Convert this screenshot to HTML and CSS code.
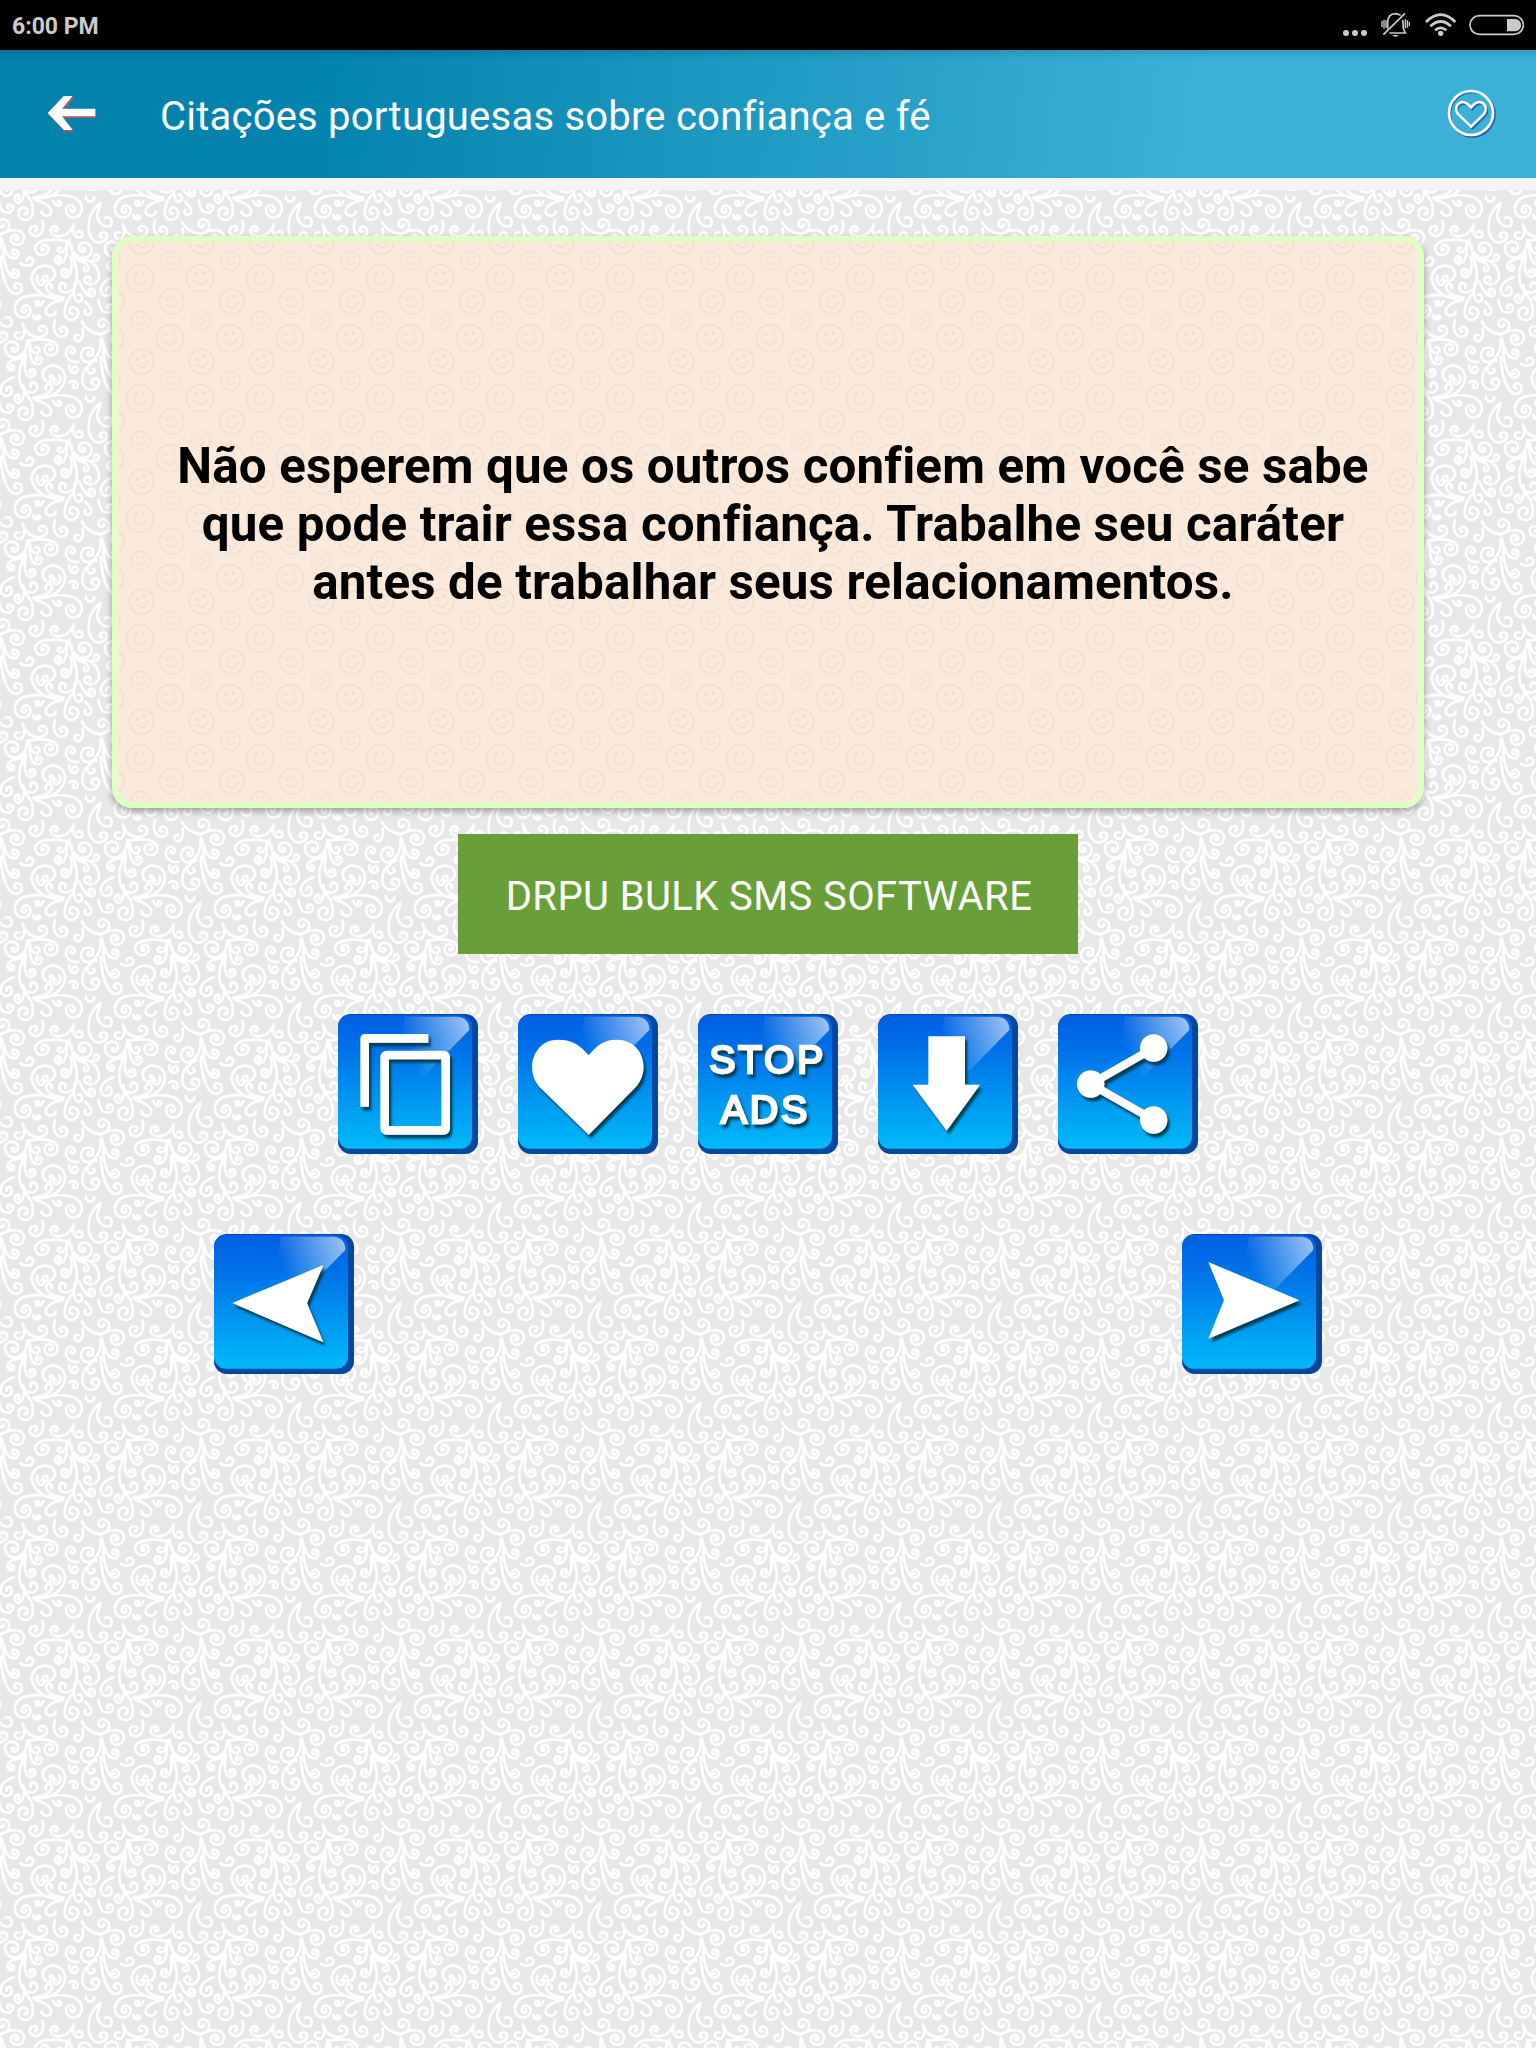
FILE: index.html
```html
<!DOCTYPE html>
<html lang="pt">

<head>
    <meta charset="utf-8">
    <title>Citações portuguesas sobre confiança e fé</title>
    <link rel="stylesheet" href="styles.css">
</head>

<body>
    <!-- shared button face -->
    <svg class="defs" width="0" height="0">
        <defs>
            <linearGradient id="blue" x1="0" y1="0" x2="0" y2="1">
                <stop offset="0" stop-color="#005fe2"/>
                <stop offset="0.25" stop-color="#0070e8"/>
                <stop offset="1" stop-color="#00baf9"/>
            </linearGradient>
            <linearGradient id="gloss" gradientUnits="userSpaceOnUse" x1="210" y1="110" x2="390" y2="30">
                <stop offset="0" stop-color="#fff" stop-opacity="0"/>
                <stop offset="1" stop-color="#fff" stop-opacity="0.6"/>
            </linearGradient>
            <filter id="shadow" x="-10%" y="-10%" width="130%" height="130%">
                <feDropShadow dx="7" dy="11" stdDeviation="3.5" flood-color="#003c50" flood-opacity="0.95"/>
            </filter>
            <symbol id="face" viewBox="0 0 420 420">
                <rect width="420" height="420" rx="38" fill="#04479f"/>
                <rect x="0" y="3" width="402" height="401" rx="36" fill="url(#blue)"/>
                <path d="M200 8H360Q394 12 394 48L205 240Q180 120 200 8Z" fill="url(#gloss)"/>
            </symbol>
        </defs>
    </svg>

    <div class="status">
        <span>6:00 PM</span>
        <svg width="188" height="50" viewBox="0 0 564 150">
            <g fill="#cbcbcb">
                <circle cx="30" cy="99" r="9"/><circle cx="57" cy="99" r="9"/><circle cx="84" cy="99" r="9"/>
                <path d="M168 105h20q-10 10-20 0z"/>
                <circle cx="314" cy="100" r="8"/>
                <path d="M513 57h24a18 18 0 0 1 0 37h-24z"/>
            </g>
            <g fill="none" stroke="#cbcbcb" stroke-width="5">
                <path d="M155 86V66Q156 42 178 41Q186 41 194 46M200 60Q202 76 202 86L208 99H160"/>
                <path d="M142 104L207 40"/>
                <path stroke-width="4" d="M138 63v18M144 59v27M150 61v22M208 58v27M214 61v22M220 65v14"/>
                <path stroke-width="8" d="M270 66Q314 22 358 66M283 79Q314 50 345 79M297 91Q314 76 331 91"/>
                <rect x="402" y="47" width="160" height="56" rx="28"/>
            </g>
        </svg>
    </div>

    <div class="header">
        <svg class="back" width="50" height="38" viewBox="0 0 150 114">
            <path fill="#b0565c" d="M3 57L51 9H80L51 44H146V69H51L80 110H52Z"/>
            <path fill="#fff" d="M2 54L50 3H77L45 41H145V64H45L77 105H51Z"/>
        </svg>
        <h1>Citações portuguesas sobre confiança e fé</h1>
        <svg class="fav" width="50" height="50" viewBox="0 0 150 150">
            <g fill="none" stroke="#2560a8" stroke-width="7" transform="translate(4 4)">
                <circle cx="75" cy="75" r="67"/>
                <path d="M75 117L37 80C19 58 43 30 66 50L75 59L84 50C107 30 131 58 113 80Z"/>
            </g>
            <g fill="none" stroke="#fff" stroke-width="8">
                <circle cx="75" cy="75" r="66"/>
                <path d="M75 116L37 79C19 57 43 29 66 49L75 58L84 49C107 29 131 57 113 79Z"/>
            </g>
        </svg>
    </div>

    <div class="content">
        <div class="card">
            <p>Não esperem que os outros confiem em você se sabe<br>que pode trair essa confiança. Trabalhe seu caráter<br>antes de trabalhar seus relacionamentos.</p>
        </div>

        <button class="sms">DRPU BULK SMS SOFTWARE</button>

        <div class="actions">
            <svg class="icon" viewBox="0 0 420 420">
                <use href="#face"/>
                <g filter="url(#shadow)" fill="none" stroke="#fff" stroke-width="26" stroke-linejoin="round">
                    <path d="M271 73H80V278"/>
                    <rect x="140" y="123" width="183" height="226" rx="6"/>
                </g>
            </svg>
            <svg class="icon" viewBox="0 0 420 420">
                <use href="#face"/>
                <path filter="url(#shadow)" fill="#fff" d="M212 362L64 218C20 170 45 77 120 77C165 77 188 95 212 124C236 95 255 77 296 77C373 77 400 165 354 218Z"/>
            </svg>
            <svg class="icon" viewBox="0 0 420 420">
                <use href="#face"/>
                <g filter="url(#shadow)" class="label">
                    <text x="34" y="177" textLength="342">STOP</text>
                    <text x="68" y="327" textLength="260">ADS</text>
                </g>
            </svg>
            <svg class="icon" viewBox="0 0 420 420">
                <use href="#face"/>
                <path filter="url(#shadow)" fill="#fff" d="M151 67H261V212H306L206 350L104 212H151Z"/>
            </svg>
            <svg class="icon" viewBox="0 0 420 420">
                <use href="#face"/>
                <g filter="url(#shadow)" fill="#fff">
                    <path d="M287 102L98 210L287 318" fill="none" stroke="#fff" stroke-width="24"/>
                    <circle cx="98" cy="210" r="41"/>
                    <circle cx="287" cy="102" r="41"/>
                    <circle cx="287" cy="318" r="41"/>
                </g>
            </svg>
        </div>

        <div class="nav">
            <svg class="icon" viewBox="0 0 420 420">
                <use href="#face"/>
                <path filter="url(#shadow)" fill="#fff" d="M55 207L328 93L279 208L328 325Z"/>
            </svg>
            <svg class="icon" viewBox="0 0 420 420">
                <use href="#face"/>
                <path filter="url(#shadow)" fill="#fff" d="M352 199L79 84L126 199L79 314Z"/>
            </svg>
        </div>
    </div>
</body>

</html>
```
FILE: styles.css
```css
body {
    margin: 0;
    min-height: 2048px;
    display: flex;
    flex-direction: column;
    font-family: Roboto, sans-serif;
    background-color: #e8e8e8;
}

.defs {
    position: absolute;
}

.status {
    height: 50px;
    padding: 0 12px;
    display: flex;
    justify-content: space-between;
    align-items: center;
    background-color: black;
    color: #cbcbcb;
    font-size: 23px;
    font-weight: bold;
}

.status span {
    padding-top: 2px;
}

.header {
    height: 128px;
    box-sizing: border-box;
    padding: 0 40px 0 47px;
    display: flex;
    align-items: center;
    background: linear-gradient(rgba(0, 0, 0, 0.12), transparent 10px), linear-gradient(97deg, #0282ad 20%, #3bb1d8 78%);
}

.header h1 {
    flex: 1;
    margin: 4px 0 0 63px;
    color: white;
    font-size: 40px;
    font-weight: normal;
    letter-spacing: 0.22px;
    font-variant-ligatures: common-ligatures;
}

.back {
    margin-bottom: 0;
}

.fav {
    margin-bottom: 2px;
}

/* swirl wallpaper */
.content {
    flex: 1;
    display: flex;
    flex-direction: column;
    align-items: center;
    padding-top: 46px;
    border-top: 12px solid #f5f5f5;
    background-color: #e8e8e8;
    background-position: 0 -90px;
    background-image: url("data:image/svg+xml,%3Csvg xmlns='http://www.w3.org/2000/svg' width='200' height='200' viewBox='0 0 600 600'%3E%3Cdefs%3E%3Cpath id='s' fill='none' stroke='white' stroke-width='8' stroke-linecap='round' d='M68 72C75 105 110 120 135 105C150 92 135 72 120 80C112 86 118 96 126 92M85 122C120 115 170 115 173 145C173 172 135 172 133 147C134 128 160 128 158 145C156 152 148 150 148 146M82 120C85 150 60 178 35 172C8 160 8 125 38 125C60 128 58 155 42 155C32 152 34 143 42 144M80 130C75 180 50 200 60 250C70 285 115 285 112 260C108 242 88 246 92 260M78 165C70 200 75 232 95 230C112 226 108 202 92 208C84 214 90 222 96 216M88 130C88 170 95 195 115 193C130 188 128 168 113 170C104 174 108 184 115 180M88 122C90 150 100 162 112 160C124 154 118 138 108 142M100 295C150 300 195 270 195 230C192 190 135 185 128 220C128 250 155 250 160 232C155 222 148 226 150 234M178 228C186 240 175 258 162 250C155 242 162 236 168 240M100 293C130 290 160 275 155 258C148 246 132 254 138 268M105 298C150 285 240 270 246 325C246 360 200 362 198 330C200 308 228 312 224 332C220 340 210 336 213 328M160 303C165 322 185 322 184 308C178 300 170 304 174 311M105 300C130 305 158 320 153 340C148 352 128 350 124 335M78 282C105 310 105 355 80 360C50 362 48 322 72 322C88 326 84 344 74 342M70 255C75 270 72 305 55 308C38 304 42 282 56 284C62 290 58 298 54 296M75 172C45 180 22 180 22 200C26 216 46 214 42 200C38 192 30 196 33 203M42 232C10 240 -5 265 5 280C18 295 38 285 35 268C28 255 16 262 20 272M-4 300C0 330 10 340 25 338C45 332 42 312 25 314C18 318 20 326 26 325M72 85C75 110 65 120 52 116C40 108 46 92 58 98M165 60C155 95 170 112 188 110C208 104 204 78 186 80C176 84 178 96 186 94M248 85C252 115 240 128 228 122C218 114 226 100 236 106M235 186C205 190 190 165 202 145C215 132 232 150 222 160C214 162 210 156 214 152M245 65C265 100 310 115 327 85C332 55 298 48 295 72C298 86 314 82 312 72M300 105C320 90 370 80 372 112C370 142 332 140 333 115C338 100 358 104 354 118C350 124 344 120 346 115M302 115C305 160 280 190 258 186C235 175 240 142 268 142C285 148 282 168 268 168C258 164 262 156 268 157M305 115C315 160 330 180 348 174C362 164 354 146 340 150C332 156 338 166 345 162M310 145C310 190 325 240 350 232C364 222 354 204 340 210C332 216 338 226 346 221M302 170C305 230 320 275 345 282C372 282 370 245 348 250C338 256 342 268 350 264M270 195C240 210 240 260 265 268C295 275 308 240 288 235C272 234 270 254 284 255M290 180C265 190 258 205 265 218C278 226 290 212 280 205M208 195C205 222 232 225 234 208C230 196 216 198 218 208M208 248C225 236 240 252 230 264C220 268 214 258 222 254M362 190C370 200 400 200 400 182C395 168 378 172 380 183M427 62C435 95 420 110 403 108C382 102 386 78 404 78C414 82 412 94 404 94M522 72C515 100 480 120 455 102C442 80 470 70 475 88C472 98 462 94 464 88M505 125C470 115 405 115 405 148C410 172 445 170 446 146C440 128 420 134 424 150C430 154 434 150 432 146M508 118C510 150 530 180 560 172C585 158 575 125 548 128C530 135 536 160 552 155C560 150 555 142 548 145M500 130C505 170 490 196 470 190C458 180 465 165 480 170C484 178 478 184 473 180M500 122C500 150 490 160 478 156C468 148 476 138 484 143M515 140C520 185 540 220 525 260C510 285 475 280 478 260C484 242 502 250 496 264M512 170C520 205 510 235 492 230C478 222 484 204 498 208C506 216 498 222 494 218M485 297C440 300 395 270 395 232C400 190 460 185 465 220C462 248 430 250 430 232C436 222 446 228 442 236M412 228C406 248 418 260 430 252C436 244 428 236 422 242M490 293C460 290 435 275 438 258C446 246 460 254 454 266M490 298C440 285 350 270 344 325C346 362 392 360 392 330C388 310 362 312 366 334C372 342 382 336 377 328M430 303C425 322 404 320 406 307C412 300 420 304 416 311M490 300C460 305 432 318 438 340C445 350 464 350 468 335M520 280C490 310 485 355 512 360C540 360 542 322 518 322C504 326 508 344 518 342M525 250C518 275 522 305 537 306C552 300 546 282 535 284M538 245C550 275 565 292 580 288C592 275 580 262 568 268C562 276 570 282 576 277M520 165C545 185 590 190 597 172C594 158 580 162 582 172M545 178C580 180 600 205 596 235C585 262 555 255 552 238C560 222 575 230 570 242M532 180C545 185 570 190 565 210C555 218 548 208 553 202M520 90C520 110 535 118 546 110C550 96 538 90 532 97M600 10C560 40 555 100 585 125C610 135 632 110 615 98C600 94 594 110 606 112M600 20C580 50 600 85 630 78C645 60 625 45 615 55M258 288C255 308 282 310 283 292M400 345C402 362 420 362 420 350C416 344 410 346 411 352M555 305C570 320 578 330 572 340C560 350 548 338 556 330'/%3E%3C/defs%3E%3Cuse href='%23s'/%3E%3Cuse href='%23s' x='-600'/%3E%3Cuse href='%23s' x='600'/%3E%3Cuse href='%23s' x='300' y='300'/%3E%3Cuse href='%23s' x='-300' y='300'/%3E%3Cuse href='%23s' x='300' y='-300'/%3E%3Cuse href='%23s' x='-300' y='-300'/%3E%3C/svg%3E");
}

.card {
    width: 1312px;
    height: 572px;
    box-sizing: border-box;
    border: 6px solid #dfffc4;
    border-radius: 20px;
    padding: 4px 0 0 10px;
    display: flex;
    justify-content: center;
    align-items: center;
    box-shadow: 0 3px 7px rgba(0, 0, 0, 0.35);
    background-color: #fbeadb;
    background-position: -18px -22px;
    background-image: url("data:image/svg+xml,%3Csvg xmlns='http://www.w3.org/2000/svg' width='60' height='120' viewBox='0 0 180 360'%3E%3Cdefs%3E%3Cg id='f' fill='none' stroke='%23f1dfd0' stroke-width='5'%3E%3Ccircle r='41'/%3E%3Cpath d='M-19 6Q3 34 21 2'/%3E%3Ccircle cx='-13' cy='-12' r='3'/%3E%3Ccircle cx='11' cy='-16' r='3'/%3E%3C/g%3E%3Cg id='r'%3E%3Cuse href='%23f' x='120' y='175'/%3E%3Cuse href='%23f' transform='translate(35 245) rotate(-12) scale(.9)'/%3E%3Cuse href='%23f' transform='translate(215 245) rotate(-12) scale(.9)'/%3E%3Cuse href='%23f' transform='translate(122 302) scale(.7)'/%3E%3C/g%3E%3C/defs%3E%3Cuse href='%23r'/%3E%3Cuse href='%23r' x='90' y='180'/%3E%3Cuse href='%23r' x='-90' y='180'/%3E%3Cuse href='%23r' x='90' y='-180'/%3E%3Cuse href='%23r' x='-90' y='-180'/%3E%3C/svg%3E");
}

.card p {
    margin: 0;
    text-align: center;
    white-space: nowrap;
    color: black;
    font-size: 49.3px;
    font-weight: bold;
    line-height: 58px;
    letter-spacing: 0.16px;
}

.sms {
    width: 620px;
    height: 120px;
    margin-top: 26px;
    padding: 4px 0 0 2px;
    border: none;
    background-color: #689f38;
    color: white;
    font-family: inherit;
    font-size: 40px;
    letter-spacing: 0.4px;
    white-space: nowrap;
}

.actions {
    display: flex;
    gap: 40px;
    margin-top: 60px;
}

.nav {
    width: 1108px;
    display: flex;
    justify-content: space-between;
    margin-top: 80px;
}

.icon {
    width: 140px;
    height: 140px;
    display: block;
}

.label {
    fill: white;
    stroke: white;
    stroke-width: 7px;
    font-family: "Liberation Sans", sans-serif;
    font-size: 118px;
}
```
